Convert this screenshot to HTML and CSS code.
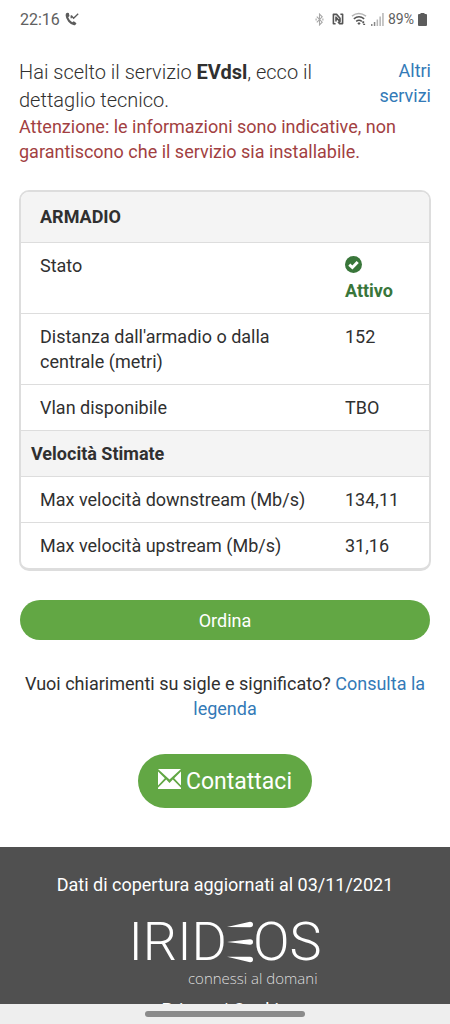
FILE: index.html
```html
<!DOCTYPE html>
<html lang="it">
<head>
<meta charset="utf-8">
<meta name="viewport" content="width=device-width, initial-scale=1">
<title>Dettaglio tecnico EVdsl</title>
<link rel="stylesheet" href="styles.css">
</head>
<body>
<div class="screen">
  <header class="status">
    <div class="status-group">
      <span class="clock">22:16</span>
      <svg class="icon-call" viewBox="0 0 14 14" aria-hidden="true"><path d="M2.2.8 3.8 1 4.5 4 3.2 5.2Q4.3 8.4 7.2 10.2L8.8 9.2 11.5 11.2 10.3 13Q7 14 3.3 9.7-.3 4.9 1 1.5Z" fill="#5c5c5c"/><path d="M6.2 3.5 8.6 6.2 13.2 1.8M6.2 6.2V3.4" fill="none" stroke="#5c5c5c" stroke-width="1.3"/></svg>
    </div>
    <div class="status-group right">
      <svg class="icon-bt" viewBox="0 0 10 14" aria-hidden="true"><path d="M2 3.8 8 10 5 13V1L8 4 2 10.2" fill="none" stroke="#a6a6a6" stroke-width="1.2"/><path d="M.5 6h1.5v2H.5zM8 6h1.5v2H8z" fill="#b5b5b5"/></svg>
      <svg class="icon-nfc" viewBox="0 0 12 12" aria-hidden="true"><path d="M3.6 10.8H1.4V1.4H4.6L8 5.2V8.6L4 4.2V8.4M8.4 1.2H10.6V10.6H7.6L6 8.8" fill="none" stroke="#555" stroke-width="1.6" stroke-linejoin="round"/></svg>
      <svg class="icon-wifi" viewBox="0 0 17 14" aria-hidden="true"><path d="M1 4Q8 -1.5 16 4" fill="none" stroke="#b5b5b5" stroke-width="1.5"/><path d="M3 6.8Q8.5 2.6 14 6.8M5.5 9.5Q8.5 7 11.5 9.5" fill="none" stroke="#555" stroke-width="1.6"/><path d="m6.7 11.4 1.8-1 1.8 1-1.8 1.9zM12 9.5h2v2h-2zM13 12h2v1.5h-2z" fill="#555"/></svg>
      <svg class="icon-signal" viewBox="0 0 13 13" aria-hidden="true"><path d="M0 11h1.5v2H0zM2.8 9h1.5v4H2.8z" fill="#888"/><path d="M5.6 6.5h1.5V13H5.6zM8.4 3.5h1.5V13H8.4zM11.2 0h1.5v13h-1.5z" fill="#b5b5b5"/></svg>
      <span class="battery-text">89%</span>
      <svg class="icon-battery" viewBox="0 0 9 13" aria-hidden="true"><path d="M2.5 0h4v1H8q1 0 1 1v10q0 1-1 1H1q-1 0-1-1V2q0-1 1-1h1.5z" fill="#5c5c5c"/></svg>
    </div>
  </header>

  <div class="page">
    <main class="content">
      <div class="intro">
        <p class="lead">Hai scelto il servizio <strong>EVdsl</strong>, ecco il dettaglio tecnico.</p>
        <a class="other" href="#servizi">Altri servizi</a>
      </div>
      <p class="warning">Attenzione: le informazioni sono indicative, non garantiscono che il servizio sia installabile.</p>

      <div class="panel">
        <table class="details">
          <colgroup><col><col class="col-value"></colgroup>
          <thead>
            <tr class="title"><th colspan="2">ARMADIO</th></tr>
          </thead>
          <tbody>
            <tr>
              <td>Stato</td>
              <td class="active">
                <svg class="icon-ok" viewBox="0 0 17 17" aria-hidden="true"><circle cx="8.5" cy="8.5" r="8.5" fill="#39763a"/><path d="M4.3 8.6 7.4 11.5 12.7 6" fill="none" stroke="#fff" stroke-width="3"/></svg>
                <strong>Attivo</strong>
              </td>
            </tr>
            <tr><td>Distanza dall'armadio o dalla centrale (metri)</td><td>152</td></tr>
            <tr><td>Vlan disponibile</td><td>TBO</td></tr>
            <tr class="section"><th colspan="2">Velocità Stimate</th></tr>
            <tr><td>Max velocità downstream (Mb/s)</td><td>134,11</td></tr>
            <tr><td>Max velocità upstream (Mb/s)</td><td>31,16</td></tr>
          </tbody>
        </table>
      </div>

      <button class="btn order" type="button">Ordina</button>
      <p class="help">Vuoi chiarimenti su sigle e significato? <a href="#legenda">Consulta la legenda</a></p>
      <button class="btn contact" type="button">
        <svg class="icon-mail" viewBox="0 0 23 20" aria-hidden="true"><path d="M0 0H23L11.5 10.5ZM0 2.6 6.8 9.2 0 16.5ZM23 2.6V16.5L16.2 9.2ZM0 20V18.8L8.2 10.4 11.5 14 14.8 10.4 23 18.8V20Z" fill="#fff"/></svg>
        <span>Contattaci</span>
      </button>
    </main>

    <footer class="footer">
      <p class="updated">Dati di copertura aggiornati al 03/11/2021</p>
      <div class="brand">
        <div class="wordmark">
          <span>IRID</span>
          <svg class="bars" viewBox="0 0 26 42" role="img" aria-label="E"><path d="M0 6 23 .8Q26 .8 26 3.4T23 6.2ZM0 21 23 18.2Q26 18.2 26 21T23 23.8ZM0 35.8 23 35.8Q26 35.8 26 38.6T23 41.2Z" fill="#fff"/></svg>
          <span>OS</span>
        </div>
        <span class="tagline">connessi al domani</span>
      </div>
      <p class="legal">Privacy | Cookie</p>
    </footer>
  </div>

  <div class="gesture"><span class="handle"></span></div>
</div>
</body>
</html>
```
FILE: styles.css
```css
* { box-sizing: border-box; }

body {
  margin: 0;
  background: #fff;
  color: #303030;
  font-family: Roboto, "Liberation Sans", sans-serif;
  font-size: 18px;
  line-height: 25px;
}

p { margin: 0; }

a {
  color: #337ab7;
  text-decoration: none;
}

.screen {
  display: flex;
  flex-direction: column;
  height: 100vh;
}

.status {
  display: flex;
  flex: none;
  justify-content: space-between;
  align-items: center;
  height: 38px;
  padding: 0 23px 0 20px;
  color: #606060;
}

.status-group {
  display: flex;
  align-items: center;
  gap: 5px;
}

.right { gap: 4px; }
.clock { font-size: 16px; }
.battery-text { font-size: 14px; }
.icon-call { width: 14px; height: 14px; }
.icon-bt { width: 9px; height: 13px; margin-right: 4px; }
.icon-nfc { width: 12px; height: 12px; margin-right: 3px; }
.icon-wifi { width: 16px; height: 14px; }
.icon-signal { width: 13px; height: 13px; }
.icon-battery { width: 9px; height: 13px; }

.page {
  display: flex;
  flex: 1;
  flex-direction: column;
  min-height: 0;
  overflow: hidden;
}

.content {
  display: flex;
  flex: none;
  flex-direction: column;
  padding: 20px 19px 39px;
}

.intro {
  display: grid;
  grid-template-columns: 3fr 1fr;
}

.lead {
  font-size: 20px;
  font-weight: 300;
  line-height: 28px;
}

.lead strong { font-weight: 700; }

.other {
  padding-left: 24px;
  text-align: right;
}

.warning { color: #a23f42; }

.panel {
  margin-top: 26px;
  overflow: hidden;
  border: 2px solid #ddd;
  border-bottom-width: 3px;
  border-radius: 10px;
}

.details {
  width: 100%;
  border-collapse: collapse;
  table-layout: fixed;
}

.col-value { width: 94px; }

.details td,
.details th {
  padding: 10px;
  border-top: 1px solid #ddd;
  text-align: left;
  vertical-align: top;
}

.details td:first-child { padding-left: 19px; }

.title th,
.section th { background: #f4f4f4; }

.details .title th {
  padding: 12px 19px 13px;
  border-top: 0;
}

.active { color: #39763a; }
.active strong { display: block; }

.icon-ok {
  display: block;
  width: 17px;
  height: 17px;
  margin: 3px 0 5px;
}

.btn {
  border: 0;
  background: #62a744;
  color: #fff;
  font-family: inherit;
}

.order {
  height: 40px;
  margin: 29px 1px 0;
  border-radius: 20px;
  font-size: 18px;
}

.help {
  margin-top: 31px;
  text-align: center;
}

.contact {
  display: flex;
  align-self: center;
  align-items: center;
  gap: 5px;
  height: 54px;
  margin-top: 33px;
  padding: 0 20px;
  border-radius: 27px;
  font-size: 23px;
}

.icon-mail { width: 23px; height: 20px; margin-bottom: 4px; }

.footer {
  display: flex;
  flex: 1 0 auto;
  flex-direction: column;
  align-items: center;
  padding-top: 25px;
  background: #505050;
  color: #fff;
  text-align: center;
}

.brand {
  display: flex;
  flex-direction: column;
  align-items: flex-end;
  margin-top: 24px;
}

.wordmark {
  display: flex;
  align-items: center;
  font-size: 54px;
  font-weight: 300;
  line-height: 42px;
}

.bars { width: 26px; height: 42px; }

.tagline {
  margin-top: 5px;
  padding-right: 4px;
  color: #ddd;
  font-family: "Open Sans", "Noto Sans", sans-serif;
  font-size: 15px;
  font-weight: 300;
  line-height: 20px;
}

.legal { margin-top: 9px; }

.gesture {
  display: flex;
  flex: none;
  justify-content: center;
  align-items: center;
  height: 20px;
  background: #eee;
}

.handle {
  width: 160px;
  height: 6px;
  border-radius: 3px;
  background: #8a8a8a;
}
```
